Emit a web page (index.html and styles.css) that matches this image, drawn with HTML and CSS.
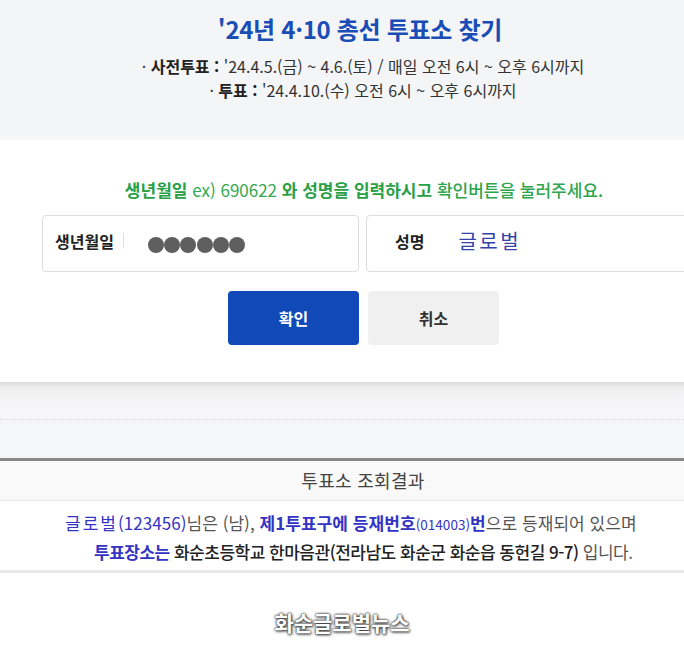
FILE: index.html
```html
<!DOCTYPE html>
<html lang="ko">
<head>
<meta charset="utf-8">
<link rel="stylesheet" href="styles.css">
</head>
<body>
<header class="top">
  <h1 class="title">'24년 4·10 총선 투표소 찾기</h1>
  <p class="info">· <b>사전투표 :</b> '24.4.5.(금) ~ 4.6.(토) / 매일 오전 6시 ~ 오후 6시까지</p>
  <p class="info">· <b>투표 :</b> '24.4.10.(수) 오전 6시 ~ 오후 6시까지</p>
</header>
<section class="panel">
  <p class="guide"><b>생년월일</b> <span class="thin">ex) 690622</span> <b>와 성명을 입력하시고</b> <span class="mid">확인버튼을 눌러주세요.</span></p>
  <div class="fields">
    <div class="field">
      <span class="label">생년월일</span><span class="sep"></span>
      <span class="dots"><i></i><i></i><i></i><i></i><i></i><i></i></span>
    </div>
    <div class="field field-name">
      <span class="label">성명</span>
      <span class="value">글로벌</span>
    </div>
  </div>
  <div class="buttons">
    <button class="btn btn-ok">확인</button>
    <button class="btn btn-cancel">취소</button>
  </div>
</section>
<div class="gap">
  <div class="dotline"></div>
</div>
<section class="result">
  <div class="result-head">투표소 조회결과</div>
  <div class="result-body">
    <p class="r1"><span class="blue spaced">글로벌</span><span class="blue">(123456)</span>님은 (남), <b class="blue">제1투표구에 등재번호</b><span class="blue small">(014003)</span><b class="blue">번</b>으로 등재되어 있으며</p>
    <p class="r2"><b class="blue">투표장소는</b> <b class="dark">화순초등학교 한마음관(전라남도 화순군 화순읍 동헌길 9-7)</b> 입니다.</p>
  </div>
</section>
<footer class="foot">
  <span class="mark">화순글로벌뉴스</span>
</footer>
</body>
</html>
```
FILE: styles.css
```css
* { box-sizing: border-box; margin: 0; padding: 0; }
body {
  width: 684px;
  height: 660px;
  overflow: hidden;
  background: #fff;
  font-family: "Noto Sans CJK KR", "Noto Sans", sans-serif;
  color: #333;
}
.top {
  background: #f4f5f7;
  height: 140px;
  padding-top: 11px;
  padding-left: 42px;
  text-align: center;
  border-bottom: 4px solid #f7f8fa;
}
.title {
  font-size: 24px;
  font-weight: 700;
  color: #1a4db5;
  letter-spacing: -0.3px;
  line-height: 36px;
  margin-bottom: 7px;
  padding-right: 6px;
}
.info {
  font-size: 16px;
  line-height: 24px;
  color: #333;
  letter-spacing: 0;
}
.info b { font-weight: 700; color: #222; }
.panel {
  background: #fff;
  height: 242px;
  padding-top: 37px;
}
.guide {
  text-align: center;
  font-size: 17px;
  line-height: 26px;
  color: #27a046;
  letter-spacing: 0;
  padding-left: 44px;
}
.guide b { font-weight: 700; }
.guide .thin { font-weight: 400; color: #35a84f; }
.guide .mid { font-weight: 500; color: #2ea44d; }
.fields {
  display: flex;
  gap: 7px;
  margin-top: 12px;
  padding-left: 42px;
}
.field {
  width: 317px;
  height: 57px;
  border: 1px solid #dcdcdc;
  border-radius: 4px;
  display: flex;
  align-items: center;
  padding-left: 12px;
  flex-shrink: 0;
}
.field-name { width: 330px; padding-left: 28px; }
.label {
  font-size: 16px;
  font-weight: 700;
  color: #222;
  margin-top: -6px;
}
.sep {
  width: 1px;
  height: 14px;
  background: #ddd;
  margin: -8px 0 0 9px;
}
.dots {
  display: flex;
  gap: 0;
  margin-left: 24px;
  margin-top: 2px;
}
.dots i {
  width: 16px;
  height: 16px;
  margin-right: 0.3px;
  border-radius: 50%;
  background: #5f5f5f;
}
.value {
  font-size: 20px;
  color: #3442a8;
  margin-left: 34px;
  margin-top: -6px;
  letter-spacing: 2.5px;
}
.buttons {
  display: flex;
  justify-content: center;
  gap: 9px;
  margin-top: 19px;
  padding-left: 43px;
}
.btn {
  width: 131px;
  height: 54px;
  border: none;
  border-radius: 4px;
  font-family: inherit;
  font-size: 16px;
  font-weight: 700;
}
.btn-ok { background: #1249b9; color: #fff; }
.btn-cancel { background: #f0f0f0; color: #333; }
.gap {
  height: 76px;
  background: linear-gradient(#dcdcdc 0, #eeeeee 6px, #f5f5f7 18px, #f5f6f8 100%);
  padding-top: 37px;
}
.dotline {
  border-top: 1px dotted #d8d8d8;
}
.result-head {
  border-top: 3px solid #8a8a8a;
  height: 43px;
  background: #f9f9f9;
  border-bottom: 1px solid #e6e6e6;
  text-align: center;
  padding-left: 42px;
  font-size: 18px;
  letter-spacing: 0.3px;
  line-height: 38px;
  color: #444;
}
.result-body {
  height: 72px;
  padding-top: 8px;
  border-bottom: 3px solid #e8e8e8;
  font-size: 17px;
  line-height: 27px;
  color: #555;
}
.r1 { padding-left: 65px; letter-spacing: 0.05px; white-space: nowrap; }
.r2 { padding-left: 94px; letter-spacing: -0.5px; white-space: nowrap; }
.blue { color: #3333c4; font-weight: 400; }
.spaced { letter-spacing: 2px; }
b.blue { font-weight: 700; }
.small { font-size: 13.5px; }
.dark { color: #222; font-weight: 500; }
.foot {
  text-align: center;
  padding-top: 34px;
}
.mark {
  display: inline-block;
  font-size: 21px;
  font-weight: 700;
  color: #fff;
  letter-spacing: 0;
  text-shadow: 0 0 2px #333, 0 0 3px #555, 1px 1px 3px #444;
}
```
